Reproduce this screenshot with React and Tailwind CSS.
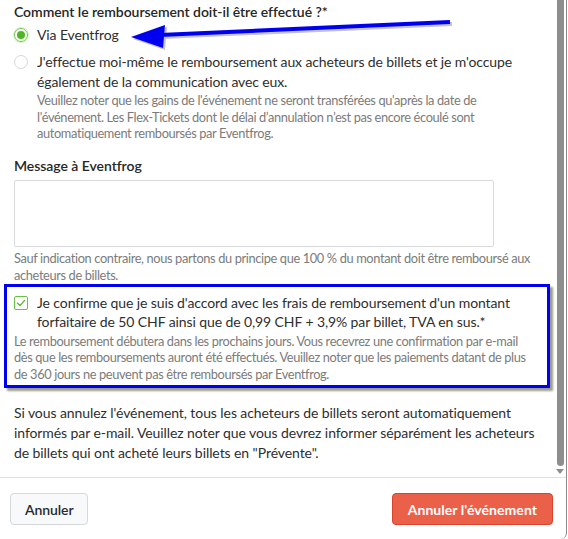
import React from "react";

export default function App() {
  return (
    <div className="relative w-[568px] h-[539px] bg-white overflow-hidden text-[#2e2e2e]" style={{ fontFamily: "Lato, 'Liberation Sans', sans-serif" }}>
      <div className="w-[567px] h-[539px] border-r border-[#8a8a8a] rounded-br-md flex flex-col">
        <div className="h-[477px] flex flex-row">
          <div className="flex-1 pl-[14px] pr-[20px] pt-[2px]">
            <div className="text-[14px] leading-[20px] font-semibold tracking-[-0.05px] text-[#262626]">Comment le remboursement doit-il être effectué ?*</div>
            <div className="mt-[3px] flex items-start gap-[9px]">
              <span className="mt-[3px] w-[14px] h-[14px] rounded-full border border-[#72c94a] shadow-[0_0_0_1px_#d9f2cc] flex items-center justify-center shrink-0">
                <span className="w-[8px] h-[8px] rounded-full bg-[#4fb523]" />
              </span>
              <span className="text-[14px] leading-[20px] tracking-[-0.12px]">Via Eventfrog</span>
            </div>
            <div className="mt-[7px] flex items-start gap-[9px]">
              <span className="mt-[3px] w-[14px] h-[14px] rounded-full border border-[#d4d6d9] bg-white shrink-0" />
              <div>
                <div className="text-[14px] leading-[20px] tracking-[-0.12px]">J'effectue moi-même le remboursement aux acheteurs de billets et je m'occupe également de la communication avec eux.</div>
                <div className="text-[12.8px] leading-[16.5px] tracking-[-0.36px] text-[#7b7b7b]">Veuillez noter que les gains de l'événement ne seront transférées qu'après la date de l'événement. Les Flex-Tickets dont le délai d’annulation n’est pas encore écoulé sont automatiquement remboursés par Eventfrog.</div>
              </div>
            </div>
            <div className="mt-[14px] text-[14px] leading-[20px] font-semibold tracking-[-0.05px] text-[#262626]">Message à Eventfrog</div>
            <div className="mt-[4px] w-[480px] h-[67px] border border-[#d9dadc] rounded-[2px] bg-white" />
            <div className="mt-[3px] text-[12.8px] leading-[17px] tracking-[-0.36px] text-[#7b7b7b]">Sauf indication contraire, nous partons du principe que 100 % du montant doit être remboursé aux acheteurs de billets.</div>
            <div className="mt-[9px] flex items-start gap-[9px]">
              <span className="mt-[3px] w-[14px] h-[14px] rounded-[2px] border border-[#6cc04a] bg-white flex items-center justify-center shrink-0">
                <svg width="10" height="10" viewBox="0 0 10 10"><path d="M1.5 5.2 L4 7.6 L8.6 2.4" fill="none" stroke="#5cb82f" strokeWidth="1.4" strokeLinecap="round" strokeLinejoin="round" /></svg>
              </span>
              <div className="text-[14px] leading-[19px] tracking-[-0.1px]">Je confirme que je suis d'accord avec les frais de remboursement d'un montant forfaitaire de 50 CHF ainsi que de 0,99 CHF + 3,9% par billet, TVA en sus.*</div>
            </div>
            <div className="mt-[2px] text-[12.8px] leading-[16.5px] tracking-[-0.36px] text-[#7b7b7b]">Le remboursement débutera dans les prochains jours. Vous recevrez une confirmation par e-mail dès que les remboursements auront été effectués. Veuillez noter que les paiements datant de plus de 360 jours ne peuvent pas être remboursés par Eventfrog.</div>
            <div className="mt-[21px] text-[14px] leading-[20px] tracking-[-0.08px]">Si vous annulez l'événement, tous les acheteurs de billets seront automatiquement informés par e-mail. Veuillez noter que vous devrez informer séparément les acheteurs de billets qui ont acheté leurs billets en "Prévente".</div>
          </div>
          <div className="w-[11px] shrink-0 flex flex-col items-center pr-[1px]">
            <div className="w-[7px] h-[466px] rounded-b-full bg-[#8e8e8e]" />
            <svg className="mt-[3px]" width="8" height="5" viewBox="0 0 8 5"><path d="M0 0 L8 0 L4 5 Z" fill="#8e8e8e" /></svg>
          </div>
        </div>
        <div className="border-t border-[#dde1e5] flex flex-row justify-between items-start pl-[10px] pr-[13px] pt-[15px]">
          <button className="h-[32px] px-[14px] border border-[#d5d9de] rounded-[4px] bg-[#f8f9fa] text-[14px] font-semibold tracking-[-0.1px] text-[#2a2a2a]">Annuler</button>
          <button className="h-[32px] px-[15px] border border-[#d8432c] rounded-[4px] bg-[#ea6048] text-[14px] font-bold tracking-[0.05px] text-white">Annuler l'événement</button>
        </div>
      </div>

      {/* annotation box */}
      <div className="absolute left-[4px] top-[284px] w-[546px] h-[104px] border-[3px] border-[#0000f0] shadow-[3px_3px_2px_#9c9c8c]" />
      {/* annotation arrow */}
      <svg className="absolute left-0 top-0" width="568" height="80" viewBox="0 0 568 80">
        <g transform="translate(2,2)" opacity="0.35">
          <path d="M160 35 L450 22" stroke="#555" strokeWidth="4" fill="none" />
          <path d="M131 37 L165 25 L163 48 Z" fill="#555" />
        </g>
        <path d="M160 35 L450 22" stroke="#0000f0" strokeWidth="4" fill="none" />
        <path d="M131 37 L165 25 L163 48 Z" fill="#0000f0" />
      </svg>
    </div>
  );
}
